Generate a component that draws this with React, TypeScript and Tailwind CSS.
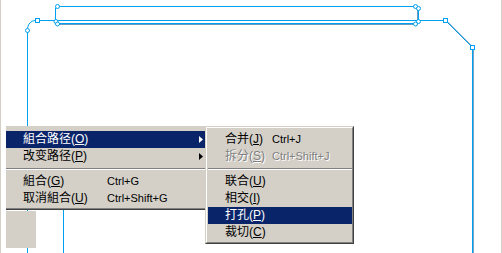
import React from 'react';

const BLUE = '#00a0f0';

type ItemProps = {
  label: string;
  acc: string;
  shortcut?: string;
  arrow?: boolean;
  active?: boolean;
  disabled?: boolean;
  labelW: string;
};

function MenuItem({ label, acc, shortcut, arrow, active, disabled, labelW }: ItemProps) {
  const tone = active
    ? 'bg-[#0a246a] text-white'
    : disabled
      ? 'text-[#808080] [text-shadow:1px_1px_0_#ffffff]'
      : 'text-black';
  return (
    <div className={`flex h-[17px] items-center pl-[17px] pr-[5px] ${tone}`}>
      <span className={`${labelW} shrink-0 whitespace-nowrap text-[12px] leading-[17px] font-['Liberation_Sans','Noto_Sans_CJK_SC',sans-serif]`}>
        {label}(<u className="underline-offset-[1px]">{acc}</u>)
      </span>
      {shortcut && (
        <span className="whitespace-nowrap text-[11px] leading-[17px] font-['Liberation_Sans',sans-serif]">
          {shortcut}
        </span>
      )}
      {arrow && (
        <svg className="ml-auto" width="4" height="7" viewBox="0 0 4 7">
          <polygon points="0,0 4,3.5 0,7" fill={active ? '#ffffff' : '#000000'} />
        </svg>
      )}
    </div>
  );
}

function Separator() {
  return (
    <div className="h-[8px] pt-[3px]">
      <div className="h-px bg-[#808080]" />
      <div className="h-px bg-white" />
    </div>
  );
}

export default function App() {
  return (
    <div className="relative h-[253px] w-[502px] overflow-hidden border-l border-r border-[#d4d0c8] bg-white">
      {/* canvas drawing */}
      <svg className="absolute left-[-1px] top-0" width="502" height="253" shapeRendering="crispEdges">
        <g fill="none" stroke={BLUE} strokeWidth="1">
          <path d="M57 6.5 H416" />
          <path d="M57 23.5 H416" />
          <path d="M57 24.5 H416" stroke="#6a9cc0" />
          <path d="M55.5 8 V22" />
          <path d="M418.5 8 V22" />
          <path d="M417.5 9 V21" stroke="#6a9cc0" />
          <path d="M37 20.5 H445" />
          <path d="M27.5 30 V253" />
          <path d="M63.5 200 V253" />
          <path d="M472.5 47 V253" />
          <path d="M473.5 50 V253" stroke="#7aa4c4" />
        </g>
        <g fill="none" stroke={BLUE} strokeWidth="1" shapeRendering="auto">
          <path d="M35 20.5 Q29 21 27.5 28" />
          <path d="M447 22 L471 46" />
          <path d="M448 22 L472 46" stroke="#8aa8c0" />
        </g>
        <g fill="#ffffff" stroke={BLUE} strokeWidth="1" shapeRendering="auto">
          <rect x="35.5" y="18.5" width="4" height="4" />
          <rect x="443.5" y="18.5" width="4" height="4" />
          <rect x="470.5" y="45.5" width="4" height="4" />
          <circle cx="27.5" cy="30.5" r="2" />
          <circle cx="57.5" cy="6.5" r="2" />
          <circle cx="56" cy="21.5" r="2" />
          <circle cx="57.5" cy="24" r="2" />
          <circle cx="415.5" cy="6.5" r="2" />
          <circle cx="418.5" cy="8.5" r="2" />
          <circle cx="418.5" cy="21.5" r="2" />
          <circle cx="415.5" cy="24" r="2" />
        </g>
      </svg>

      {/* toolbox stub under the menu */}
      <div className="absolute left-[5px] top-[211px] h-[37px] w-[30px] bg-[#d4d0c8]" />

      {/* main context menu */}
      <div className="absolute left-[5px] top-[126px] w-[204px] border-b border-r border-[#404040] bg-[#d4d0c8]">
        <div className="border-b border-r border-[#808080] pb-px pt-[5px]">
          <MenuItem label="組合路径" acc="O" arrow active labelW="w-[84px]" />
          <MenuItem label="改变路径" acc="P" arrow labelW="w-[84px]" />
          <Separator />
          <MenuItem label="組合" acc="G" shortcut="Ctrl+G" labelW="w-[84px]" />
          <MenuItem label="取消組合" acc="U" shortcut="Ctrl+Shift+G" labelW="w-[84px]" />
        </div>
      </div>

      {/* submenu */}
      <div className="absolute left-[204px] top-[126px] w-[149px] border border-b-[#404040] border-l-[#d4d0c8] border-r-[#404040] border-t-[#d4d0c8] bg-[#d4d0c8]">
        <div className="border border-b-[#808080] border-l-white border-r-[#808080] border-t-white pb-px pl-px pt-[3px]">
          <MenuItem label="合并" acc="J" shortcut="Ctrl+J" labelW="w-[47px]" />
          <MenuItem label="拆分" acc="S" shortcut="Ctrl+Shift+J" disabled labelW="w-[47px]" />
          <Separator />
          <MenuItem label="联合" acc="U" labelW="w-[47px]" />
          <MenuItem label="相交" acc="I" labelW="w-[47px]" />
          <MenuItem label="打孔" acc="P" active labelW="w-[47px]" />
          <MenuItem label="裁切" acc="C" labelW="w-[47px]" />
        </div>
      </div>
    </div>
  );
}
